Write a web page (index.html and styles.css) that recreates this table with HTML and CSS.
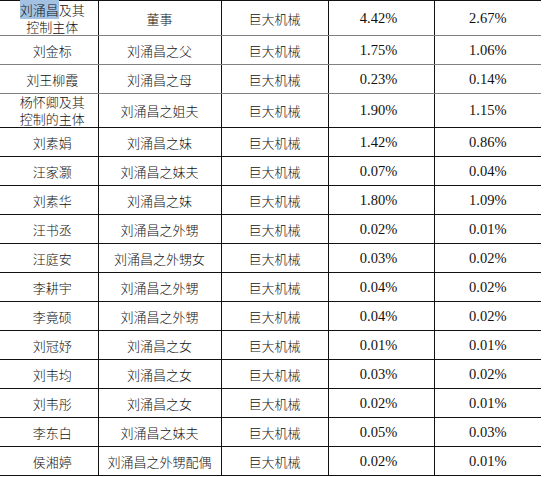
FILE: index.html
```html
<!DOCTYPE html>
<html lang="zh">
<head>
<meta charset="utf-8">
<link rel="stylesheet" href="styles.css">
</head>
<body>
<table class="holdings">
  <colgroup>
    <col class="c1"><col class="c2"><col class="c3"><col class="c4"><col class="c5">
  </colgroup>
  <tbody>
    <tr class="tall first"><td class="name"><span class="ln"><span class="sel">刘涌昌</span>及其</span><span class="ln">控制主体</span></td><td>董事</td><td>巨大机械</td><td class="num">4.42%</td><td class="num">2.67%</td></tr>
    <tr class="light"><td class="name">刘金标</td><td>刘涌昌之父</td><td>巨大机械</td><td class="num">1.75%</td><td class="num">1.06%</td></tr>
    <tr class="light"><td class="name">刘王柳霞</td><td>刘涌昌之母</td><td>巨大机械</td><td class="num">0.23%</td><td class="num">0.14%</td></tr>
    <tr class="tall second"><td class="name"><span class="ln">杨怀卿及其</span><span class="ln">控制的主体</span></td><td>刘涌昌之姐夫</td><td>巨大机械</td><td class="num">1.90%</td><td class="num">1.15%</td></tr>
    <tr><td class="name">刘素娟</td><td>刘涌昌之妹</td><td>巨大机械</td><td class="num">1.42%</td><td class="num">0.86%</td></tr>
    <tr><td class="name">汪家灏</td><td>刘涌昌之妹夫</td><td>巨大机械</td><td class="num">0.07%</td><td class="num">0.04%</td></tr>
    <tr><td class="name">刘素华</td><td>刘涌昌之妹</td><td>巨大机械</td><td class="num">1.80%</td><td class="num">1.09%</td></tr>
    <tr><td class="name">汪书丞</td><td>刘涌昌之外甥</td><td>巨大机械</td><td class="num">0.02%</td><td class="num">0.01%</td></tr>
    <tr><td class="name">汪庭安</td><td>刘涌昌之外甥女</td><td>巨大机械</td><td class="num">0.03%</td><td class="num">0.02%</td></tr>
    <tr><td class="name">李耕宇</td><td>刘涌昌之外甥</td><td>巨大机械</td><td class="num">0.04%</td><td class="num">0.02%</td></tr>
    <tr><td class="name">李竟硕</td><td>刘涌昌之外甥</td><td>巨大机械</td><td class="num">0.04%</td><td class="num">0.02%</td></tr>
    <tr><td class="name">刘冠妤</td><td>刘涌昌之女</td><td>巨大机械</td><td class="num">0.01%</td><td class="num">0.01%</td></tr>
    <tr><td class="name">刘韦均</td><td>刘涌昌之女</td><td>巨大机械</td><td class="num">0.03%</td><td class="num">0.02%</td></tr>
    <tr><td class="name">刘韦彤</td><td>刘涌昌之女</td><td>巨大机械</td><td class="num">0.02%</td><td class="num">0.01%</td></tr>
    <tr><td class="name">李东白</td><td>刘涌昌之妹夫</td><td>巨大机械</td><td class="num">0.05%</td><td class="num">0.03%</td></tr>
    <tr><td class="name">侯湘婷</td><td>刘涌昌之外甥配偶</td><td>巨大机械</td><td class="num">0.02%</td><td class="num">0.01%</td></tr>
  </tbody>
</table>
</body>
</html>
```

FILE: styles.css
```css
html, body {
  margin: 0;
  padding: 0;
  background: #ffffff;
}

body {
  font-family: "Liberation Serif", "Noto Sans CJK SC", serif;
  color: #111111;
}

.holdings {
  border-collapse: collapse;
  table-layout: fixed;
  width: 541px;
}

.c1 { width: 98px; }
.c2 { width: 123px; }
.c3 { width: 107px; }
.c4 { width: 106px; }
.c5 { width: 107px; }

.holdings td {
  height: 28px;
  padding: 0;
  text-align: center;
  vertical-align: middle;
  font-family: "Noto Sans CJK SC", sans-serif;
  font-weight: 300;
  font-size: 13px;
  line-height: 17px;
  color: #111111;
  border-bottom: 1px solid #111;
  border-left: 1px solid #111;
}

.holdings td:first-child {
  border-left: none;
}

.holdings tr.light td {
  border-bottom-color: #808080;
}

.holdings tr.first td {
  border-bottom-color: #808080;
  border-top: 1px solid #111;
}

.holdings tr.tall td {
  height: 33px;
}

.ln {
  display: block;
}

.holdings tr.second .ln {
  line-height: 16.5px;
}

.holdings td.num {
  font-family: "Liberation Serif", serif;
  font-weight: 400;
  font-size: 14.5px;
}

.holdings tr td:nth-child(4) {
  padding-right: 5px;
}

.holdings td.name {
  padding-left: 7px;
}

.sel {
  background: #a3c2e2;
}
```
